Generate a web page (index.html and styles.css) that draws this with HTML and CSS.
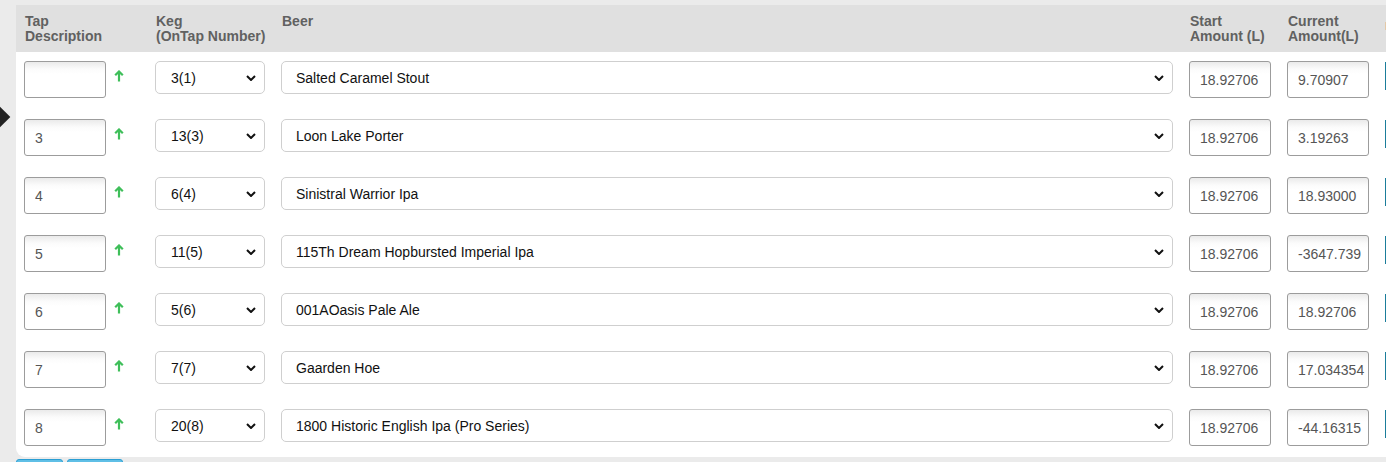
FILE: index.html
```html
<!DOCTYPE html>
<html>
<head>
<meta charset="utf-8">
<link rel="stylesheet" href="styles.css">
</head>
<body>
<div class="pager-arrow"></div>
<div class="panel">
  <div class="row head">
    <div class="th">Tap<br>Description</div>
    <div class="th">Keg<br>(OnTap Number)</div>
    <div class="th">Beer</div>
    <div class="th">Start<br>Amount (L)</div>
    <div class="th">Current<br>Amount(L)</div>
    <div class="th"><span class="mark"></span></div>
  </div>

  <div class="row">
    <div class="td tap"><input class="txt" type="text" value=""><svg class="up" viewBox="0 0 10 12"><path d="M5 11.5V1.5M1.2 5.3L5 1.5L8.8 5.3"/></svg></div>
    <div class="td"><div class="sel keg"><span>3(1)</span><svg class="chev" viewBox="0 0 10 6"><path d="M1 1L5 5L9 1"/></svg></div></div>
    <div class="td"><div class="sel beer"><span>Salted Caramel Stout</span><svg class="chev" viewBox="0 0 10 6"><path d="M1 1L5 5L9 1"/></svg></div></div>
    <div class="td"><input class="txt" type="text" value="18.92706"></div>
    <div class="td"><input class="txt" type="text" value="9.70907"></div>
    <div class="td"><span class="act"></span></div>
  </div>

  <div class="row">
    <div class="td tap"><input class="txt" type="text" value="3"><svg class="up" viewBox="0 0 10 12"><path d="M5 11.5V1.5M1.2 5.3L5 1.5L8.8 5.3"/></svg></div>
    <div class="td"><div class="sel keg"><span>13(3)</span><svg class="chev" viewBox="0 0 10 6"><path d="M1 1L5 5L9 1"/></svg></div></div>
    <div class="td"><div class="sel beer"><span>Loon Lake Porter</span><svg class="chev" viewBox="0 0 10 6"><path d="M1 1L5 5L9 1"/></svg></div></div>
    <div class="td"><input class="txt" type="text" value="18.92706"></div>
    <div class="td"><input class="txt" type="text" value="3.19263"></div>
    <div class="td"><span class="act"></span></div>
  </div>

  <div class="row">
    <div class="td tap"><input class="txt" type="text" value="4"><svg class="up" viewBox="0 0 10 12"><path d="M5 11.5V1.5M1.2 5.3L5 1.5L8.8 5.3"/></svg></div>
    <div class="td"><div class="sel keg"><span>6(4)</span><svg class="chev" viewBox="0 0 10 6"><path d="M1 1L5 5L9 1"/></svg></div></div>
    <div class="td"><div class="sel beer"><span>Sinistral Warrior Ipa</span><svg class="chev" viewBox="0 0 10 6"><path d="M1 1L5 5L9 1"/></svg></div></div>
    <div class="td"><input class="txt" type="text" value="18.92706"></div>
    <div class="td"><input class="txt" type="text" value="18.93000"></div>
    <div class="td"><span class="act"></span></div>
  </div>

  <div class="row">
    <div class="td tap"><input class="txt" type="text" value="5"><svg class="up" viewBox="0 0 10 12"><path d="M5 11.5V1.5M1.2 5.3L5 1.5L8.8 5.3"/></svg></div>
    <div class="td"><div class="sel keg"><span>11(5)</span><svg class="chev" viewBox="0 0 10 6"><path d="M1 1L5 5L9 1"/></svg></div></div>
    <div class="td"><div class="sel beer"><span>115Th Dream Hopbursted Imperial Ipa</span><svg class="chev" viewBox="0 0 10 6"><path d="M1 1L5 5L9 1"/></svg></div></div>
    <div class="td"><input class="txt" type="text" value="18.92706"></div>
    <div class="td"><input class="txt" type="text" value="-3647.739"></div>
    <div class="td"><span class="act"></span></div>
  </div>

  <div class="row">
    <div class="td tap"><input class="txt" type="text" value="6"><svg class="up" viewBox="0 0 10 12"><path d="M5 11.5V1.5M1.2 5.3L5 1.5L8.8 5.3"/></svg></div>
    <div class="td"><div class="sel keg"><span>5(6)</span><svg class="chev" viewBox="0 0 10 6"><path d="M1 1L5 5L9 1"/></svg></div></div>
    <div class="td"><div class="sel beer"><span>001AOasis Pale Ale</span><svg class="chev" viewBox="0 0 10 6"><path d="M1 1L5 5L9 1"/></svg></div></div>
    <div class="td"><input class="txt" type="text" value="18.92706"></div>
    <div class="td"><input class="txt" type="text" value="18.92706"></div>
    <div class="td"><span class="act"></span></div>
  </div>

  <div class="row">
    <div class="td tap"><input class="txt" type="text" value="7"><svg class="up" viewBox="0 0 10 12"><path d="M5 11.5V1.5M1.2 5.3L5 1.5L8.8 5.3"/></svg></div>
    <div class="td"><div class="sel keg"><span>7(7)</span><svg class="chev" viewBox="0 0 10 6"><path d="M1 1L5 5L9 1"/></svg></div></div>
    <div class="td"><div class="sel beer"><span>Gaarden Hoe</span><svg class="chev" viewBox="0 0 10 6"><path d="M1 1L5 5L9 1"/></svg></div></div>
    <div class="td"><input class="txt" type="text" value="18.92706"></div>
    <div class="td"><input class="txt" type="text" value="17.034354"></div>
    <div class="td"><span class="act"></span></div>
  </div>

  <div class="row last">
    <div class="td tap"><input class="txt" type="text" value="8"><svg class="up" viewBox="0 0 10 12"><path d="M5 11.5V1.5M1.2 5.3L5 1.5L8.8 5.3"/></svg></div>
    <div class="td"><div class="sel keg"><span>20(8)</span><svg class="chev" viewBox="0 0 10 6"><path d="M1 1L5 5L9 1"/></svg></div></div>
    <div class="td"><div class="sel beer"><span>1800 Historic English Ipa (Pro Series)</span><svg class="chev" viewBox="0 0 10 6"><path d="M1 1L5 5L9 1"/></svg></div></div>
    <div class="td"><input class="txt" type="text" value="18.92706"></div>
    <div class="td"><input class="txt" type="text" value="-44.16315"></div>
    <div class="td"><span class="act"></span></div>
  </div>
</div>
<div class="buttons">
  <span class="btn b1"></span>
  <span class="btn b2"></span>
</div>
</body>
</html>
```

FILE: styles.css
```css
html, body {
  margin: 0;
  padding: 0;
  overflow: hidden;
}
body {
  background: #ebebeb;
  font-family: "Liberation Sans", Arial, sans-serif;
  font-size: 14px;
  width: 1386px;
  height: 462px;
  position: relative;
}
.pager-arrow {
  position: absolute;
  left: -9px;
  top: 109px;
  width: 16px;
  height: 16px;
  background: #222;
  transform: rotate(45deg);
  z-index: 2;
}
.panel {
  margin: 5px 0 0 16px;
  width: 1500px;
  background: #fff;
  border-bottom-left-radius: 9px;
}
.row {
  display: grid;
  grid-template-columns: 131px 126px 908px 98px 98px 1fr;
  height: 58px;
  box-sizing: border-box;
}
.row.last {
  height: 57px;
}
.row.head {
  height: 47px;
  background: #e0e0e0;
}
.th {
  padding: 9px 0 0 9px;
  font-weight: bold;
  color: #616161;
  line-height: 15px;
}
.mark {
  display: block;
  width: 3px;
  height: 8px;
  margin: 8px 0 0 -1px;
  background: #e4c9a8;
}
.td {
  padding: 9px 0 0 8px;
  display: flex;
  align-items: flex-start;
}
.txt {
  box-sizing: border-box;
  width: 82px;
  height: 37px;
  margin: 0;
  border: 1px solid #9c9c9c;
  border-radius: 3px;
  padding: 0 0 0 10px;
  font-family: "Liberation Sans", Arial, sans-serif;
  font-size: 14px;
  color: #555;
  background: linear-gradient(to bottom, #eaeaea 0, #fbfbfb 7px, #fff 12px);
  outline: none;
}
.up {
  width: 10px;
  height: 12px;
  margin: 9px 0 0 8px;
  fill: none;
  stroke: #3fbf5a;
  stroke-width: 2.2;
}
.sel {
  box-sizing: border-box;
  height: 33px;
  border: 1px solid #cfcfcf;
  border-radius: 5px;
  display: flex;
  align-items: center;
  justify-content: space-between;
  padding: 0 4px 0 15px;
  color: #111;
  background: #fff;
}
.sel.keg {
  width: 110px;
}
.sel.beer {
  width: 892px;
  padding-left: 14px;
}
.chev {
  width: 10px;
  height: 6px;
  fill: none;
  stroke: #111;
  stroke-width: 2;
  margin-right: 4px;
}
.act {
  display: block;
  width: 30px;
  height: 28px;
  margin-top: 1px;
  border-left: 1px solid #1b7d9b;
  background: #fff;
}
.buttons {
  display: flex;
  gap: 4px;
  margin: 2px 0 0 16px;
}
.btn {
  display: block;
  box-sizing: border-box;
  height: 20px;
  border: 1px solid #2b9ed3;
  border-radius: 3px;
  background: #5fbfe6;
}
.b1 { width: 47px; }
.b2 { width: 56px; }
```
